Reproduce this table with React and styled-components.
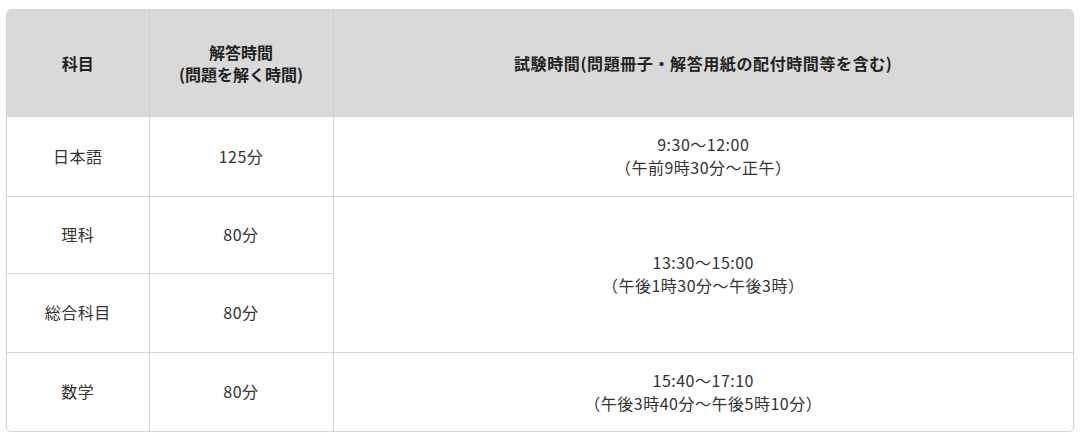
import React from 'react';
import styled, { createGlobalStyle } from 'styled-components';

const GlobalStyle = createGlobalStyle`
  body {
    margin: 0;
    background: #fff;
    font-family: "Noto Sans CJK JP", "Noto Sans", sans-serif;
  }
`;

const Page = styled.div`
  padding: 9px 8px 0 6px;
`;

const Frame = styled.div`
  width: 1066px;
  border: 1px solid #d6d6d6;
  border-radius: 5px;
  overflow: hidden;
  box-shadow: 0 1px 2px rgba(0, 0, 0, 0.08);
`;

const Table = styled.table`
  width: 100%;
  border-collapse: collapse;
  table-layout: fixed;
`;

const HeadRow = styled.tr`
  height: 106px;
  background: #d9d9d9;
`;

const BodyRow = styled.tr`
  height: ${p => p.$h}px;
`;

const Th = styled.th`
  font-size: 16px;
  font-weight: 700;
  color: #222;
  line-height: 22px;
  text-align: center;
  vertical-align: middle;
  padding: 0 8px;
  letter-spacing: ${p => (p.$wide ? '0.6px' : '0')};
  border-left: 1px solid #cfcfcf;
  &:first-child { border-left: none; }
`;

const Td = styled.td`
  font-size: 16px;
  color: #333;
  line-height: 23px;
  letter-spacing: 0.5px;
  text-align: center;
  vertical-align: middle;
  padding: 0 8px;
  border-left: 1px solid #d6d6d6;
  border-top: 1px solid #d6d6d6;
  &:first-child { border-left: none; }
`;

const rows = [
  { subject: '日本語', time: '125分', h: 80, slot: ['9:30～12:00', '（午前9時30分～正午）'] },
  { subject: '理科', time: '80分', h: 77, slot: ['13:30～15:00', '（午後1時30分～午後3時）'], span: 2 },
  { subject: '総合科目', time: '80分', h: 79 },
  { subject: '数学', time: '80分', h: 79, slot: ['15:40～17:10', '（午後3時40分～午後5時10分）'] },
];

export default function App() {
  return (
    <>
      <GlobalStyle />
      <Page>
        <Frame>
          <Table>
            <colgroup>
              <col style={{ width: 142 }} />
              <col style={{ width: 184 }} />
              <col />
            </colgroup>
            <thead>
              <HeadRow>
                <Th>科目</Th>
                <Th>解答時間<br />(問題を解く時間)</Th>
                <Th $wide>試験時間(問題冊子・解答用紙の配付時間等を含む)</Th>
              </HeadRow>
            </thead>
            <tbody>
              {rows.map(r => (
                <BodyRow key={r.subject} $h={r.h}>
                  <Td>{r.subject}</Td>
                  <Td>{r.time}</Td>
                  {r.slot && (
                    <Td rowSpan={r.span || 1}>
                      {r.slot[0]}<br />{r.slot[1]}
                    </Td>
                  )}
                </BodyRow>
              ))}
            </tbody>
          </Table>
        </Frame>
      </Page>
    </>
  );
}
